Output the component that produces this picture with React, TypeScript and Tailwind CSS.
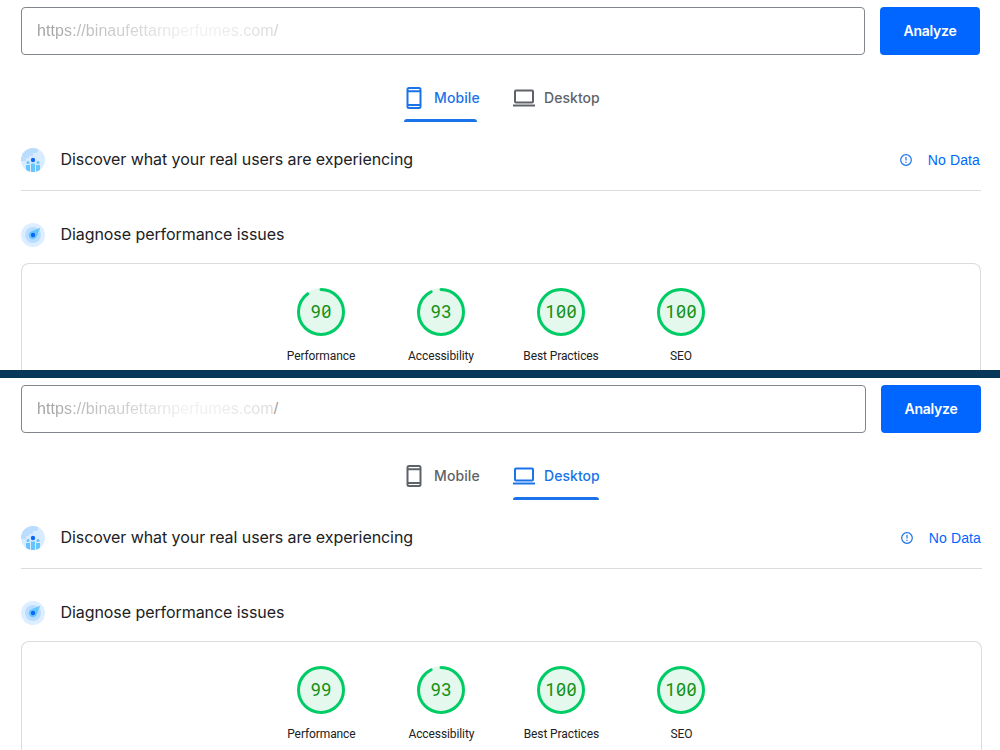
import clsx from 'clsx';

type Device = 'mobile' | 'desktop';

type Score = {
  label: string;
  value: number;
  // visible length of the arc, out of 100
  arc: number;
};

const mobileScores: Score[] = [
  { label: 'Performance', value: 90, arc: 90 },
  { label: 'Accessibility', value: 93, arc: 92.8 },
  { label: 'Best Practices', value: 100, arc: 100 },
  { label: 'SEO', value: 100, arc: 100 },
];

const desktopScores: Score[] = [
  { label: 'Performance', value: 99, arc: 100 },
  { label: 'Accessibility', value: 93, arc: 92.8 },
  { label: 'Best Practices', value: 100, arc: 100 },
  { label: 'SEO', value: 100, arc: 100 },
];

function MobileIcon() {
  return (
    <svg width="16" height="22" viewBox="0 0 16 22" fill="none" stroke="currentColor" strokeWidth="2">
      <rect x="1.5" y="1" width="13" height="20" rx="1.5" />
      <path d="M1.5 4.3h13M1.5 18h13" />
    </svg>
  );
}

function DesktopIcon() {
  return (
    <svg width="22" height="18" viewBox="0 0 22 18" fill="none" stroke="currentColor" strokeWidth="2">
      <rect x="2" y="1.5" width="18" height="12" rx="1" />
      <path d="M0 16.5h22" />
    </svg>
  );
}

function UsersIcon() {
  return (
    <svg width="24" height="24" viewBox="0 0 24 24">
      <defs>
        <clipPath id="users-disc">
          <circle cx="12" cy="12" r="12" />
        </clipPath>
      </defs>
      <g clipPath="url(#users-disc)">
        <rect width="24" height="24" fill="#d9ecff" />
        <path d="M0 0h18l-2 5h-4v3H8v2H5v3H0z" fill="#b9dcff" />
        <circle cx="7" cy="14.5" r="1.6" fill="#66c5ff" />
        <circle cx="17" cy="14.5" r="1.6" fill="#66c5ff" />
        <path d="M5 17h4v7H5zM15 17h4v7h-4zM10 15.5h4V24h-4z" fill="#66c5ff" />
        <circle cx="12" cy="12" r="2.2" fill="#0d66f5" />
      </g>
    </svg>
  );
}

function GaugeIcon() {
  return (
    <svg width="24" height="24" viewBox="0 0 24 24">
      <circle cx="12" cy="12" r="12" fill="#dceeff" />
      <circle cx="12" cy="12" r="8" fill="#b9ddff" />
      <path d="M19.2 4.8 15.5 14a4.1 4.1 0 1 1-5.5-5.6z" fill="#66c5ff" />
      <circle cx="12" cy="12" r="2.2" fill="#0d66f5" />
    </svg>
  );
}

function InfoIcon() {
  return (
    <svg width="12" height="12" viewBox="0 0 12 12" fill="none" stroke="#1a73e8" strokeWidth="1.2">
      <circle cx="6" cy="6" r="5.3" />
      <path d="M6 2.9v3.7M6 7.7v1.3" />
    </svg>
  );
}

function Gauge({ score }: { score: Score }) {
  const digits = String(score.value).split('');
  const step = 10.5;
  const start = 24 - ((digits.length - 1) * step) / 2;

  return (
    <div className="flex w-[120px] flex-col items-center">
      <svg width="48" height="48" viewBox="0 0 48 48">
        <circle cx="24" cy="24" r="24" fill="#e4f8ed" />
        <circle
          cx="24"
          cy="24"
          r="22.5"
          fill="none"
          stroke="#00cc66"
          strokeWidth="3"
          strokeLinecap="round"
          pathLength="100"
          strokeDasharray={score.arc === 100 ? undefined : `${score.arc} 100`}
          transform="rotate(-90 24 24)"
        />
        {digits.map((digit, i) => (
          <g key={i}>
            <text
              x={start + i * step}
              y="30.3"
              textAnchor="middle"
              className="fill-[#149014] font-['Roboto',sans-serif] text-[18px]"
            >
              {digit}
            </text>
            {digit === '0' && (
              <path
                d={`M${start + i * step - 2.8} 26.8l5.6-5.4`}
                stroke="#149014"
                strokeWidth="1.2"
              />
            )}
          </g>
        ))}
      </svg>
      <span className="mt-[11px] font-['Roboto',sans-serif] text-xs leading-[18px] tracking-[-0.1px] text-[#212121]">
        {score.label}
      </span>
    </div>
  );
}

function Tab({ device, active }: { device: Device; active: boolean }) {
  const mobile = device === 'mobile';
  return (
    <div className={clsx('flex h-12 flex-col', mobile ? 'w-[73px]' : 'w-[86px]', active ? 'text-[#1a73e8]' : 'text-[#5f6368]')}>
      <div className="flex h-[45px] items-center whitespace-nowrap pt-0.5 font-['Inter',sans-serif] text-sm font-medium">
        <span className={mobile ? 'ml-0.5 mr-3' : 'mr-[9px]'}>{mobile ? <MobileIcon /> : <DesktopIcon />}</span>
        <span className={mobile ? 'tracking-[0.1px]' : 'tracking-[0.05px]'}>{mobile ? 'Mobile' : 'Desktop'}</span>
      </div>
      {active && <div className="h-[3px] rounded-t-[3px] bg-[#1a73e8]" />}
    </div>
  );
}

function Report({ device, scores }: { device: Device; scores: Score[] }) {
  const desktop = device === 'desktop';
  return (
    <section className={clsx('flex flex-col overflow-hidden pl-[21px] pt-[7px]', desktop ? 'h-[372px] w-[982px]' : 'h-[370px] w-[981px]')}>
      <div className="mr-px flex h-12 shrink-0 gap-[15px]">
        <div className="flex flex-1 items-center rounded border border-[#80868b] pl-[15px] font-['Liberation_Sans',sans-serif] text-base tracking-[0.09px]">
          <span className="bg-[linear-gradient(90deg,#9a9a9a_0%,#bdbdbd_20%,#d6d6d6_42%,#f0f0f0_62%,#f0f0f0_75%,#dadada_100%)] bg-clip-text text-transparent">
            https://binaufettarnperfumes.com
          </span>
          <span className={desktop ? 'text-[#a0a0a0]' : 'text-[#d6d6d6]'}>/</span>
        </div>
        <button className="w-[100px] rounded bg-[#0066ff] font-['Inter',sans-serif] text-sm font-semibold tracking-[-0.25px] text-white">
          Analyze
        </button>
      </div>

      <div className="mt-[19px] flex shrink-0 gap-9 pl-[383px]">
        <Tab device="mobile" active={!desktop} />
        <Tab device="desktop" active={desktop} />
      </div>

      <div className="flex h-[69px] shrink-0 items-center border-b border-[#dadce0] pt-[7px]">
        <UsersIcon />
        <h2 className="ml-[15.5px] pb-0.5 font-['Inter',sans-serif] text-base tracking-[-0.07px] text-[#202124]">
          Discover what your real users are experiencing
        </h2>
        <div className="ml-auto mr-px flex items-center gap-4 font-['Liberation_Sans',sans-serif] text-sm tracking-[0.12px] text-[#0066ff]">
          <InfoIcon />
          No Data
        </div>
      </div>

      <div className="flex h-[72px] shrink-0 items-center pt-4">
        <GaugeIcon />
        <h2 className="ml-[15.5px] pb-0.5 font-['Inter',sans-serif] text-base tracking-[-0.07px] text-[#202124]">
          Diagnose performance issues
        </h2>
      </div>

      <div className={clsx('flex h-[140px] shrink-0 items-start rounded-t-lg border border-b-0 border-[#dadce0] pt-6', desktop ? 'pl-[239.4px]' : 'pl-[239px]')}>
        {scores.map((score) => (
          <Gauge key={score.label} score={score} />
        ))}
      </div>
    </section>
  );
}

export default function App() {
  return (
    <main className="h-[750px] w-[1000px] overflow-hidden bg-white">
      <Report device="mobile" scores={mobileScores} />
      <div className="h-2 bg-[#073759]" />
      <Report device="desktop" scores={desktopScores} />
    </main>
  );
}
